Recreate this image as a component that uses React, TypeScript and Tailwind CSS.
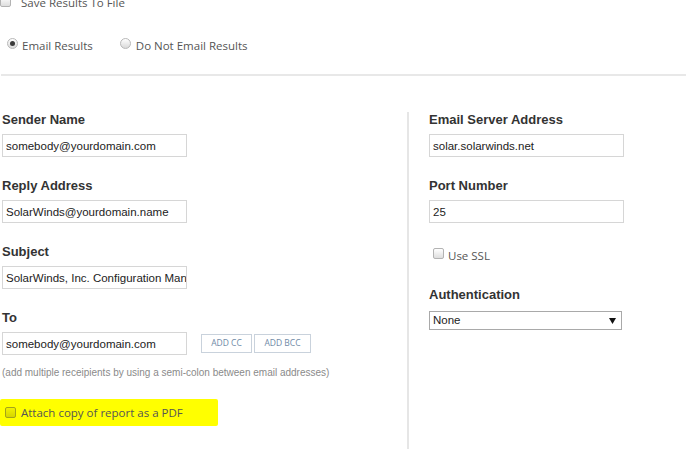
import React from "react";

const OPEN = "font-['Open_Sans',sans-serif]";
const ARIAL = "font-['Liberation_Sans',Arial,sans-serif]";

function Box({ yellow = false }: { yellow?: boolean }) {
  return (
    <span
      className={
        yellow
          ? "block w-[11px] h-[11px] shrink-0 rounded-[2px] border border-[#a3a31a] bg-linear-to-b from-[#f2f200] to-[#d6d600]"
          : "block w-[11px] h-[11px] shrink-0 rounded-[2px] border border-[#b3b3b3] bg-linear-to-b from-white to-[#dedede]"
      }
    />
  );
}

function Radio({ checked }: { checked?: boolean }) {
  return (
    <span className="flex w-[11px] h-[11px] shrink-0 items-center justify-center rounded-full border border-[#b8b8b8] bg-linear-to-b from-white to-[#d9d9d9]">
      {checked && <span className="block w-[5px] h-[5px] rounded-full bg-[#3a3a3a]" />}
    </span>
  );
}

function Label({ children }: { children: React.ReactNode }) {
  return (
    <div className={`${ARIAL} text-[13px] leading-4 h-4 font-bold text-[#333]`}>{children}</div>
  );
}

function Field({ value, width = "w-[185px]" }: { value: string; width?: string }) {
  return (
    <input
      readOnly
      value={value}
      className={`${ARIAL} ${width} mt-[6px] h-[23px] border border-[#d6d6d6] bg-white pl-[3px] text-[11.5px] text-[#222] outline-none`}
    />
  );
}

export default function App() {
  return (
    <div className="w-[687px] h-[449px] overflow-hidden bg-white">
      <div className={`${OPEN} flex items-start gap-[10px] -mt-[5px] h-4 text-[11.5px] leading-4 text-[#555]`}>
        <span className="mt-[1px]">
          <Box />
        </span>
        <span>Save Results To File</span>
      </div>

      <div className={`${OPEN} flex items-start mt-[27px] h-4 pl-[7px] text-[11.5px] leading-4 text-[#555]`}>
        <Radio checked />
        <span className="ml-[4px]">Email Results</span>
        <span className="ml-[27px]">
          <Radio />
        </span>
        <span className="ml-[5px]">Do Not Email Results</span>
      </div>

      <div className="mt-[20px] mx-[1px] h-[2px] bg-[#e8e8e8]" />

      <div className="mt-[36px] flex">
        <div className="w-[409px] shrink-0 border-r-2 border-[#e6e6e6] pl-[2px] pb-[40px]">
          <Label>Sender Name</Label>
          <Field value="somebody@yourdomain.com" />

          <div className="mt-[21px]">
            <Label>Reply Address</Label>
            <Field value="SolarWinds@yourdomain.name" />
          </div>

          <div className="mt-[21px]">
            <Label>Subject</Label>
            <Field value="SolarWinds, Inc. Configuration Manager Report" />
          </div>

          <div className="mt-[21px]">
            <Label>To</Label>
            <div className="flex items-start">
              <Field value="somebody@yourdomain.com" />
              <button
                className={`${OPEN} ml-[14px] mt-[8px] h-[19px] w-[51px] border border-[#c9d2dc] bg-white text-[8.5px] text-[#6f8aa6]`}
              >
                ADD CC
              </button>
              <button
                className={`${OPEN} ml-[2px] mt-[8px] h-[19px] w-[57px] border border-[#c9d2dc] bg-white text-[8.5px] text-[#6f8aa6]`}
              >
                ADD BCC
              </button>
            </div>
          </div>

          <div className={`${ARIAL} mt-[12px] h-3 text-[10px] leading-3 text-[#8a8a8a]`}>
            (add multiple receipients by using a semi-colon between email addresses)
          </div>

          <div
            className={`${OPEN} -ml-[2px] mt-[20px] flex h-[27px] w-[218px] items-start gap-[5px] rounded-[2px] bg-[#ffff00] pl-[5px] pt-[6px] text-[11.5px] leading-4 text-[#555]`}
          >
            <span className="mt-[2px]">
              <Box yellow />
            </span>
            <span>Attach copy of report as a PDF</span>
          </div>
        </div>

        <div className="pl-[20px]">
          <Label>Email Server Address</Label>
          <Field value="solar.solarwinds.net" width="w-[195px]" />

          <div className="mt-[21px]">
            <Label>Port Number</Label>
            <Field value="25" width="w-[195px]" />
          </div>

          <div className={`${OPEN} mt-[25px] flex h-4 items-start pl-[4px] text-[11.5px] leading-4 text-[#555]`}>
            <Box />
            <span className="ml-[4px]">Use SSL</span>
          </div>

          <div className="mt-[23px]">
            <Label>Authentication</Label>
          </div>
          <div
            className={`${ARIAL} mt-[8px] flex h-[19px] w-[193px] items-center justify-between border border-[#a9a9a9] bg-white pl-[3px] pr-[5px] text-[11.5px] text-[#222]`}
          >
            <span>None</span>
            <svg width="7" height="6" viewBox="0 0 7 6">
              <path d="M0 0 H7 L3.5 6 Z" fill="#111" />
            </svg>
          </div>
        </div>
      </div>
    </div>
  );
}
